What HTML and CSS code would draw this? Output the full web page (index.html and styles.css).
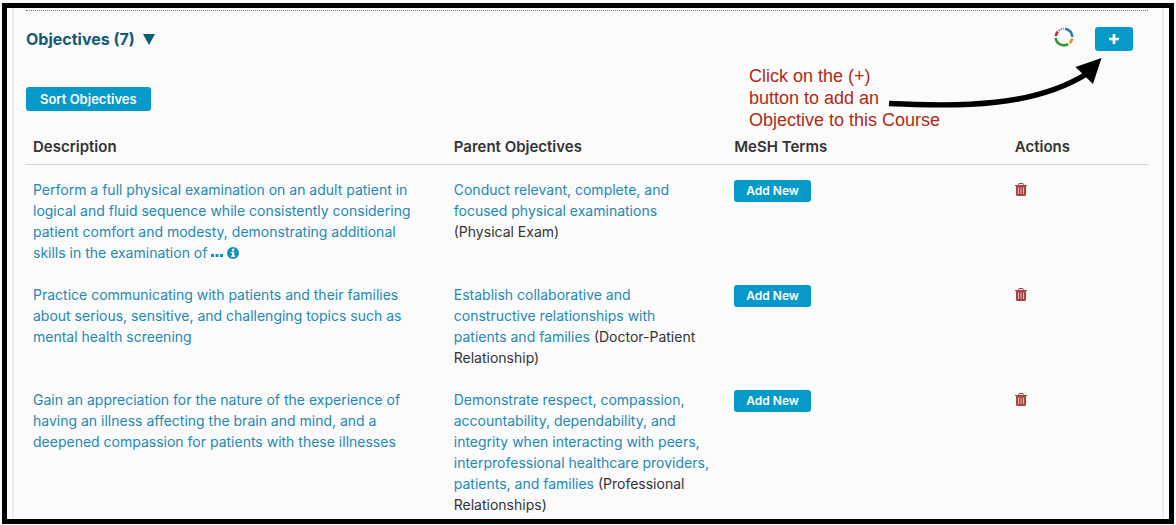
FILE: index.html
```html
<!DOCTYPE html>
<html lang="en">
<head>
<meta charset="utf-8">
<title>Course Objectives</title>
<link rel="stylesheet" href="styles.css">
</head>
<body>
<svg class="sprite" aria-hidden="true">
  <symbol id="trash" viewBox="0 0 12 13">
    <path fill="#a94442" fill-rule="evenodd" d="M4 0h4l1 2h3v1h-1v8.500q0 1.500-1.500 1.500h-7Q1 13 1 11.500V3H0V2h3zM4.300 1l-.4 1h4.200l-.4-1z"/>
    <path stroke="#e3b5b4" d="M3.500 4.500v6.500M6 4.500v6.500M8.500 4.500v6.500"/>
  </symbol>
</svg>
<main class="frame">
  <section class="panel">
    <header class="panel-header">
      <h2 class="title"><button class="title-toggle" type="button">Objectives (7)
        <svg class="caret" viewBox="0 0 12 11" aria-hidden="true"><path d="M0 0h12L6 11z" fill="#0b5c77"/></svg></button></h2>
      <div class="tools">
        <svg class="ring" viewBox="0 0 20 20" fill="none" stroke-width="2.600" aria-hidden="true">
          <path stroke="#2f78b0" d="M11 1.700A8.300 8.300 0 0 1 18.300 10"/>
          <path stroke="#f08a2c" d="M18.200 11.400A8.300 8.300 0 0 1 15.600 16.100"/>
          <path stroke="#2f9a35" d="M14.200 17.200A8.300 8.300 0 0 1 1.700 10.800"/>
          <path stroke="#c8282c" d="M1.800 9.200A8.300 8.300 0 0 1 3.700 4.600"/>
          <path stroke="#a678c4" stroke-width="2" stroke-dasharray="1.600 1" d="M4.500 3.800A8.300 8.300 0 0 1 10 1.700"/>
        </svg>
        <button class="btn btn-plus" type="button" aria-label="Add objective">
          <svg class="plus" viewBox="0 0 11 11" aria-hidden="true"><path d="M5.500 0v11M0 5.500h11" stroke="#fff" stroke-width="3"/></svg>
        </button>
      </div>
      <div class="callout">
        <p class="callout-text">Click on the (+)<br>button to add an<br>Objective to this Course</p>
        <svg class="arrow" viewBox="0 0 216 54" aria-hidden="true">
          <path d="M2 46.500C74 50 148 50 201 16" fill="none" stroke="#000" stroke-width="5.500"/>
          <path d="M214.500 1L188.500 10L206 27z"/>
        </svg>
      </div>
    </header>
    <button class="btn btn-sort" type="button">Sort Objectives</button>
    <table class="objectives">
      <colgroup><col class="col-desc"><col class="col-parent"><col class="col-mesh"><col class="col-actions"></colgroup>
      <thead>
        <tr><th scope="col">Description</th><th scope="col">Parent Objectives</th><th scope="col">MeSH Terms</th><th scope="col">Actions</th></tr>
      </thead>
      <tbody>
        <tr>
          <td class="text"><a href="#">Perform a full physical examination on an adult patient in logical and fluid sequence while consistently considering patient comfort and modesty, demonstrating additional skills in the examination of</a>
            <a class="more" href="#" aria-label="More"><svg class="dots" viewBox="0 0 12 3" aria-hidden="true"><path d="M0 0h3v3H0zM4.500 0h3v3h-3zM9 0h3v3H9z" fill="#1691bd"/></svg>
            <svg class="info" viewBox="0 0 12 12" aria-hidden="true"><circle cx="6" cy="6" r="6" fill="#1691bd"/><path d="M5 1.800h2.200v1.900H5zM4.200 4.800h3v3.700h.9V10H4.200V8.500H5V6.200h-.8z" fill="#fff"/></svg></a></td>
          <td class="text"><a href="#">Conduct relevant, complete, and focused physical examinations</a> (Physical Exam)</td>
          <td><button class="btn btn-add" type="button">Add New</button></td>
          <td><button class="btn-trash" type="button" aria-label="Remove"><svg class="trash"><use href="#trash"/></svg></button></td>
        </tr>
        <tr>
          <td class="text"><a href="#">Practice communicating with patients and their families about serious, sensitive, and challenging topics such as mental health screening</a></td>
          <td class="text"><a href="#">Establish collaborative and constructive relationships with patients and families</a> (Doctor-Patient Relationship)</td>
          <td><button class="btn btn-add" type="button">Add New</button></td>
          <td><button class="btn-trash" type="button" aria-label="Remove"><svg class="trash"><use href="#trash"/></svg></button></td>
        </tr>
        <tr>
          <td class="text"><a href="#">Gain an appreciation for the nature of the experience of having an illness affecting the brain and mind, and a deepened compassion for patients with these illnesses</a></td>
          <td class="text"><a href="#">Demonstrate respect, compassion, accountability, dependability, and integrity when interacting with peers, interprofessional healthcare providers, patients, and families</a> (Professional Relationships)</td>
          <td><button class="btn btn-add" type="button">Add New</button></td>
          <td><button class="btn-trash" type="button" aria-label="Remove"><svg class="trash"><use href="#trash"/></svg></button></td>
        </tr>
      </tbody>
    </table>
  </section>
</main>
</body>
</html>
```

FILE: styles.css
```css
* { box-sizing: border-box; }

body {
  margin: 0;
  padding: 3px 2px 1px;
  background: #fbfbfb;
  color: #333;
  font: 14px/21px Inter, "Noto Sans", sans-serif;
}

.sprite { display: none; }

.frame {
  border: 5px solid #000;
  padding: 0 5px;
  background: #fff;
}

.panel {
  border: solid #ececec;
  border-width: 0 2px;
  padding: 2px 14px 4px 12px;
  background: #fbfbfb;
}

.panel-header {
  position: relative;
  display: flex;
  justify-content: space-between;
  align-items: flex-start;
  border-top: 1px dotted #8a7a3c;
  padding: 16px 15px 0 0;
}

.title { margin: 0; font-size: 16px; line-height: 24px; }

.title-toggle {
  display: flex;
  align-items: center;
  gap: 8px;
  border: 0;
  padding: 0;
  background: none;
  color: #155a75;
  font: inherit;
  font-weight: 700;
}

.caret { width: 12px; height: 11px; }

.tools { display: flex; align-items: center; gap: 21px; }
.ring { width: 20px; height: 20px; margin-bottom: 4px; }

.btn {
  display: block;
  border: 0;
  border-radius: 3px;
  background: #069acb;
  color: #fff;
  font: 600 13px/24px Inter, "Noto Sans", sans-serif;
  padding: 0 14px;
}

.btn-plus { height: 24px; }
.plus { display: block; width: 10px; height: 10px; }
.btn-sort { margin-top: 36px; }
.btn-add { margin-top: 1px; padding: 0 12px; font-size: 12px; line-height: 22px; }

.callout {
  position: absolute;
  top: 46px;
  right: 45px;
  display: flex;
  align-items: flex-start;
}

.callout-text {
  margin: 8px -53px 0 0;
  color: #b02a14;
  font: 18px/22px "Liberation Sans", Arial, sans-serif;
}

.arrow { width: 216px; height: 54px; }

.objectives {
  width: 100%;
  margin-top: 21px;
  border-collapse: collapse;
  table-layout: fixed;
}

.col-desc { width: 37.5%; }
.col-parent, .col-mesh { width: 25%; }
.col-actions { width: 12.5%; }

th {
  border-bottom: 1px solid #d2d2d2;
  padding: 4px 7px 7px;
  text-align: left;
  font-size: 15px;
  font-weight: 600;
}

td { padding: 10px 7px 11px; vertical-align: top; }
.text { padding-right: 17px; }
tbody tr:first-child td { padding-top: 14px; }
tbody tr:last-child td { padding-bottom: 0; }

a { color: #2488b4; text-decoration: none; }
.more { white-space: nowrap; }
.dots { width: 12px; height: 3px; vertical-align: 1px; }
.info { width: 12px; height: 12px; vertical-align: -1px; }

.btn-trash { display: block; border: 0; padding: 4px 0; background: none; }
.trash { display: block; width: 12px; height: 13px; }
```
